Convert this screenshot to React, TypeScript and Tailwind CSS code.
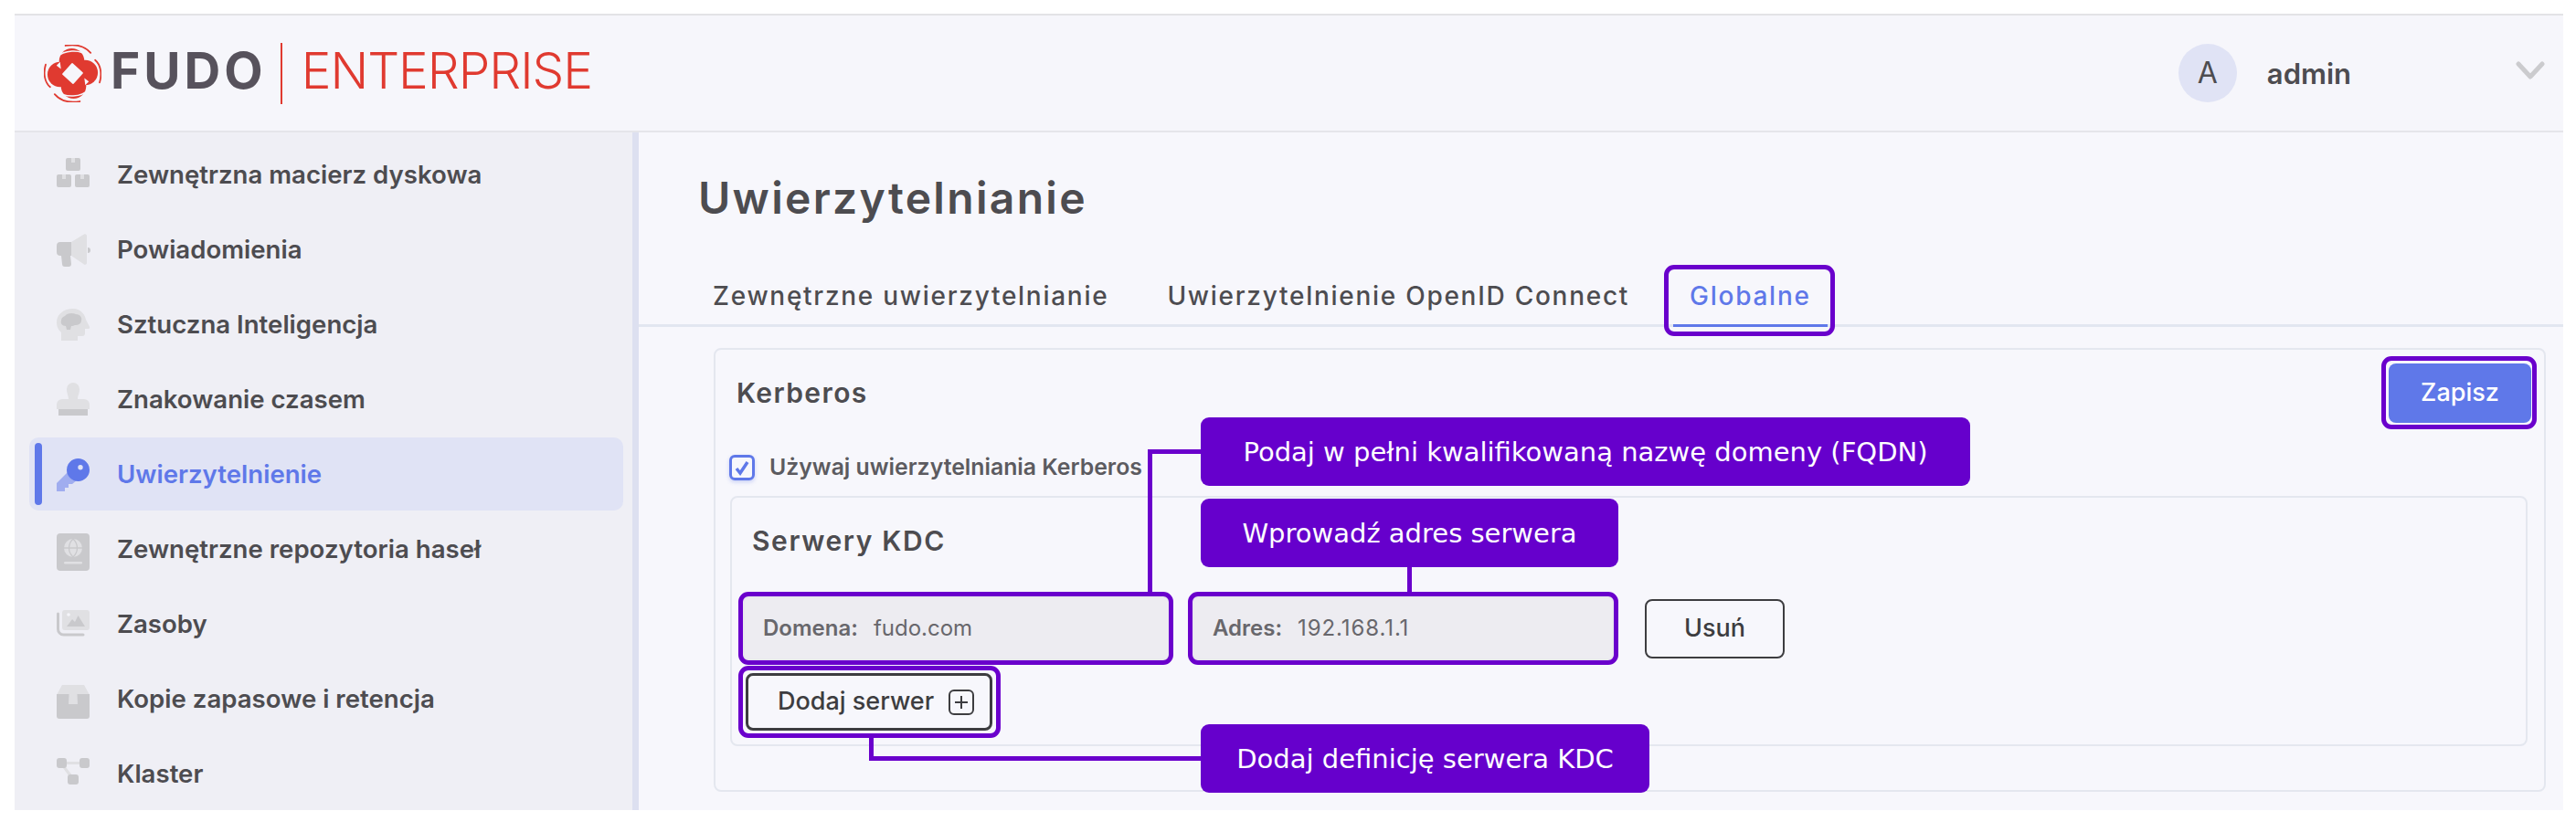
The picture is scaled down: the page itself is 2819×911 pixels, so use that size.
const INK = "text-[#4d4c50]";

function Duo({ children, active }: { children: React.ReactNode; active?: boolean }) {
  return (
    <svg viewBox="0 0 36 36" className={`w-9 h-9 shrink-0 overflow-visible ${active ? "text-[#5f78e9]" : "text-[#c9c9cc]"}`} fill="currentColor" aria-hidden="true">
      {children}
    </svg>
  );
}

const LIGHT = "#e0e0e3";

const icons: Record<string, React.ReactNode> = {
  boxes: (
    <>
      <rect x="10" y="0" width="16" height="14" rx="2" />
      <rect x="0" y="18" width="16" height="14" rx="2" />
      <rect x="20" y="18" width="16" height="14" rx="2" />
      <path d="M16 0h4v5h-4zM6 18h4v5H6zM26 18h4v5h-4z" fill={LIGHT} />
    </>
  ),
  bullhorn: (
    <>
      <path d="M16 10 L30 1.5 a2 2 0 0 1 3 1.5 V33 a2 2 0 0 1 -3 1.5 L16 25 Z" fill={LIGHT} />
      <path d="M34 16 a3 3 0 0 1 0 6 Z" />
      <path d="M4 10 H16 V25 H15 L16 34 a3 3 0 0 1 -3 3 H9 a3 3 0 0 1 -3 -3 L5 25 H4 a4 4 0 0 1 -4 -4 V14 a4 4 0 0 1 4 -4 Z" />
    </>
  ),
  brain: (
    <>
      <path d="M18 1 C27 1 31 8 32 13 L36 21 a1.5 1.5 0 0 1 -1.5 2 H31 V28 a3 3 0 0 1 -3 3 H23 V36 H5 V27 C1 23 0 20 0 16 C0 7 8 1 18 1 Z" fill={LIGHT} />
      <path d="M9 9 C11 6 17 5 21 7 C26 7 28 11 27 14 C27 18 23 19 20 19 C18 20 17 20 16 20 L15 24 H11 L10 20 C6 20 4 17 5 14 C5 11 7 10 9 9 Z" />
    </>
  ),
  stamp: (
    <>
      <path d="M18 0 a7 7 0 0 1 7 7 C25 12 23 14 23 18 H30 a6 6 0 0 1 6 6 V29 H0 V24 a6 6 0 0 1 6 -6 H13 C13 14 11 12 11 7 a7 7 0 0 1 7 -7 Z" fill={LIGHT} />
      <rect x="2" y="29" width="32" height="7" />
    </>
  ),
  key: (
    <>
      <path d="M13 15 L0 28 V37 H9 V33 H13 V29 H17 L23 24 Z" opacity="0.5" />
      <path fillRule="evenodd" d="M23.500 1 a12.500 12.500 0 1 1 0 25 a12.500 12.500 0 0 1 0 -25 Z M26 8 a2.700 2.700 0 1 0 0 5.400 a2.700 2.700 0 0 0 0 -5.400 Z" />
    </>
  ),
  passport: (
    <>
      <rect x="0" y="1" width="36" height="41" rx="4" />
      <circle cx="18" cy="17" r="10" fill={LIGHT} />
      <path d="M8 17h20M18 7c-6 6-6 14 0 20M18 7c6 6 6 14 0 20" fill="none" stroke="#c9c9cc" strokeWidth="1.300" />
      <rect x="8" y="32" width="20" height="2.500" rx="1.200" fill={LIGHT} />
    </>
  ),
  images: (
    <>
      <rect x="6" y="3" width="30" height="22" rx="3" fill={LIGHT} />
      <path d="M1.500 7 V24 a6 6 0 0 0 6 6 H29" fill="none" stroke="currentColor" strokeWidth="3" strokeLinecap="round" />
      <path d="M11 21 L17 13 L20 16 L23.500 9 L31 21 Z" />
      <circle cx="13" cy="8" r="1.800" fill="#f5f5fa" />
    </>
  ),
  box: (
    <>
      <path d="M6 3 H30 L36 14 H0 Z" fill={LIGHT} />
      <path d="M0 13 H36 V37 a3 3 0 0 1 -3 3 H3 a3 3 0 0 1 -3 -3 Z" />
      <path d="M14 3 H22 L23 24 H13 Z" fill={LIGHT} />
    </>
  ),
  network: (
    <>
      <path d="M11 5h14v3H11zM7 12l3-1 8 10-3 2z" fill={LIGHT} />
      <rect x="0" y="1" width="11" height="11" rx="3" />
      <rect x="25" y="1" width="11" height="11" rx="3" />
      <rect x="12" y="19" width="12" height="11" rx="3" />
    </>
  ),
};

const menu = [
  { label: "Zewnętrzna macierz dyskowa", icon: "boxes" },
  { label: "Powiadomienia", icon: "bullhorn" },
  { label: "Sztuczna Inteligencja", icon: "brain" },
  { label: "Znakowanie czasem", icon: "stamp" },
  { label: "Uwierzytelnienie", icon: "key", active: true },
  { label: "Zewnętrzne repozytoria haseł", icon: "passport" },
  { label: "Zasoby", icon: "images" },
  { label: "Kopie zapasowe i retencja", icon: "box" },
  { label: "Klaster", icon: "network" },
];

function Logo() {
  return (
    <svg viewBox="0 0 64 64" className="w-[63px] h-[63px] shrink-0" aria-hidden="true">
      <g fill="#e03a30">
        <circle cx="31" cy="18" r="14" />
        <circle cx="46" cy="31" r="14" />
        <circle cx="33" cy="46" r="14" />
        <circle cx="18" cy="33" r="14" />
      </g>
      <rect x="23.500" y="23.500" width="17" height="17" rx="1" fill="#f6f6fb" transform="rotate(42 32 32)" />
      <g fill="#f6f6fb">
        <path d="M14 23 L18 19 L19 27 Z" />
        <path d="M50 41 L46 45 L45 37 Z" />
      </g>
      <g fill="none" stroke="#f6f6fb" strokeWidth="1.500">
        <path d="M14 14 C22 6 40 4 50 13" />
        <path d="M50 50 C42 58 24 60 14 51" />
      </g>
      <g fill="none" stroke="#e03a30" strokeWidth="1.800" strokeLinecap="round">
        <path d="M24 1 C36 -1 46 2 52 9" />
        <path d="M40 63 C28 65 18 62 12 55" />
        <path d="M2 22 C-1 32 1 42 7 47" />
        <path d="M62 42 C65 32 63 22 57 17" />
      </g>
    </svg>
  );
}

function Field({ label, value, className, valueClass }: { label: string; value: string; className: string; valueClass?: string }) {
  return (
    <div className={`h-[70px] rounded-md bg-[#edecf1] border-2 border-[#e9e8ee] flex items-center text-[24px] text-[#68676c] ${className}`}>
      <span className="font-semibold">{label}</span>
      <span className={`ml-[17px] ${valueClass ?? ""}`}>{value}</span>
    </div>
  );
}

function Mark({ className }: { className: string }) {
  return <div className={`absolute border-[5px] border-[#6a00cc] rounded-[11px] pointer-events-none ${className}`} />;
}

function Callout({ children, className }: { children: React.ReactNode; className: string }) {
  return (
    <div className={`absolute left-[1314px] h-[75px] pt-[2px] rounded-[9px] bg-[#6600cc] text-white flex items-center justify-center text-[29px] font-['DejaVu_Sans',sans-serif] ${className}`}>
      {children}
    </div>
  );
}

export default function App() {
  return (
    <div className="relative h-[911px] bg-white pl-4 pr-[14px] pt-[15px] font-['Inter',sans-serif]">
      <div className="h-[872px] bg-[#f7f7fc] border-t-2 border-[#e3e3e6] flex flex-col overflow-hidden">
        <header className="h-[128px] shrink-0 bg-[#f6f6fb] border-b-2 border-[#e5e5ea] flex items-center pl-8 pr-5">
          <Logo />
          <span className="ml-[10px] -mt-[5px] text-[55px] leading-none font-bold text-[#57525c] tracking-[4px]">FUDO</span>
          <span className="ml-[15px] w-[2px] h-[67px] bg-[#e03a30]" />
          <span className="ml-[21px] -mt-[5px] text-[55px] leading-none font-light text-[#e03a30] tracking-[-1px]">ENTERPRISE</span>
          <div className="ml-auto w-16 h-16 rounded-full bg-[#e0e3f5] flex items-center justify-center text-[32px] text-[#4d4c50]">A</div>
          <span className={`ml-[33px] mt-[2px] text-[31px] font-semibold ${INK}`}>admin</span>
          <svg viewBox="0 0 32 20" className="ml-[180px] w-8 h-5 -mt-[6px]" fill="none" stroke="#cbcbce" strokeWidth="5" strokeLinecap="round" strokeLinejoin="round" aria-hidden="true">
            <path d="M3 3 L16 17 L29 3" />
          </svg>
        </header>
        <div className="flex flex-1 min-h-0">
          <nav className="w-[683px] shrink-0 bg-[#efeff5] border-r-[7px] border-[#dde0f0] pt-[6px] pl-4 pr-[10px] overflow-hidden">
            {menu.map((m) => (
              <div key={m.label} className={`h-20 mb-[2px] rounded-[10px] flex items-center pl-[6px] ${m.active ? "bg-[#e0e3f5]" : ""}`}>
                <span className={`w-2 h-[68px] rounded-full shrink-0 ${m.active ? "bg-[#5f78e9]" : ""}`} />
                <span className="ml-4"><Duo active={m.active}>{icons[m.icon]}</Duo></span>
                <span className={`ml-[30px] mt-[1px] text-[27.600px] font-semibold ${m.active ? "text-[#5f78e9]" : INK}`}>{m.label}</span>
              </div>
            ))}
          </nav>
          <main className="flex-1 min-w-0 flex flex-col">
            <h1 className={`pt-[44px] pl-[65px] text-[48px] leading-[56px] font-semibold tracking-[2.300px] ${INK}`}>Uwierzytelnianie</h1>
            <div className="mt-[44px] h-[69px] pl-[65px] border-b-[3px] border-[#e2e6f0] flex items-stretch gap-[32px] text-[28px] font-medium tracking-[1.730px] text-[#4d4c50]">
              <div className="px-4 pt-[3px] flex items-center">Zewnętrzne uwierzytelnianie</div>
              <div className="px-4 pt-[3px] flex items-center">Uwierzytelnienie OpenID Connect</div>
              <div className="px-[18px] pt-[3px] flex items-center text-[#5f78e9] border-b-[3px] border-[#5f78e9] -mb-[3px]">Globalne</div>
            </div>
            <section className="mt-[23px] ml-[82px] mr-[19px] h-[486px] border-2 border-[#e4e7ef] rounded-lg">
              <div className="pt-[15px] pl-[23px] pr-[14px] flex items-center justify-between">
                <h2 className={`text-[30px] font-semibold tracking-[1.400px] ${INK}`}>Kerberos</h2>
                <button className="w-[156px] h-[65px] rounded-lg bg-[#5f78e9] text-white text-[27px] font-medium">Zapisz</button>
              </div>
              <label className="mt-[30px] ml-[15px] flex items-center gap-4">
                <span className="w-7 h-7 rounded-md border-[3px] border-[#5f78e9] flex items-center justify-center shadow-[0_2px_4px_rgba(95,120,233,0.3)]">
                  <svg viewBox="0 0 16 16" className="w-4 h-[18px]" fill="none" stroke="#5f78e9" strokeWidth="3.500" aria-hidden="true">
                    <path d="M2 9 L6 14 L14 2" />
                  </svg>
                </span>
                <span className="text-[24.800px] font-semibold text-[#5c5b60]">Używaj uwierzytelniania Kerberos</span>
              </label>
              <div className="mt-[13px] ml-4 mr-[18px] h-[274px] border-2 border-[#e4e7ef] rounded-lg pt-[27px] pl-3">
                <h3 className={`pl-[10px] text-[30px] leading-10 font-semibold tracking-[1.600px] ${INK}`}>Serwery KDC</h3>
                <div className="mt-[41px] flex items-center">
                  <Field label="Domena:" value="fudo.com" className="w-[467px] pl-5" />
                  <Field label="Adres:" value="192.168.1.1" valueClass="tracking-[0.900px]" className="ml-[25px] w-[461px] pl-5" />
                  <button className="ml-[34px] w-[153px] h-[65px] rounded-lg border-2 border-[#3d3d40] text-[27px] font-medium text-[#3d3d40]">Usuń</button>
                </div>
                <button className="mt-[14px] ml-[3px] w-[270px] h-[63px] rounded-lg border-[3px] border-[#3d3d40] flex items-center pl-8 text-[27px] font-medium text-[#3d3d40]">
                  Dodaj serwer
                  <svg viewBox="0 0 28 28" className="ml-4 w-7 h-7" fill="none" stroke="#3d3d40" strokeWidth="2" aria-hidden="true">
                    <rect x="1" y="1" width="26" height="26" rx="5" />
                    <path d="M14 7v14M7 14h14" />
                  </svg>
                </button>
              </div>
            </section>
          </main>
        </div>
      </div>

      {/* annotations drawn over the screenshot */}
      <Mark className="left-[1821px] top-[290px] w-[187px] h-[78px]" />
      <Mark className="left-[2606px] top-[390px] w-[170px] h-[80px]" />
      <Mark className="left-[808px] top-[648px] w-[476px] h-[80px]" />
      <Mark className="left-[1300px] top-[648px] w-[471px] h-[80px]" />
      <Mark className="left-[808px] top-[729px] w-[287px] h-[79px]" />
      <div className="absolute left-[1256px] top-[492px] w-[58px] h-[5px] bg-[#6a00cc]" />
      <div className="absolute left-[1256px] top-[492px] w-[5px] h-[156px] bg-[#6a00cc]" />
      <div className="absolute left-[1540px] top-[621px] w-[5px] h-[27px] bg-[#6a00cc]" />
      <div className="absolute left-[951px] top-[808px] w-[5px] h-[25px] bg-[#6a00cc]" />
      <div className="absolute left-[951px] top-[828px] w-[363px] h-[5px] bg-[#6a00cc]" />
      <Callout className="top-[457px] w-[842px]">Podaj w pełni kwalifikowaną nazwę domeny (FQDN)</Callout>
      <Callout className="top-[546px] w-[457px]">Wprowadź adres serwera</Callout>
      <Callout className="top-[793px] w-[491px]">Dodaj definicję serwera KDC</Callout>
    </div>
  );
}
